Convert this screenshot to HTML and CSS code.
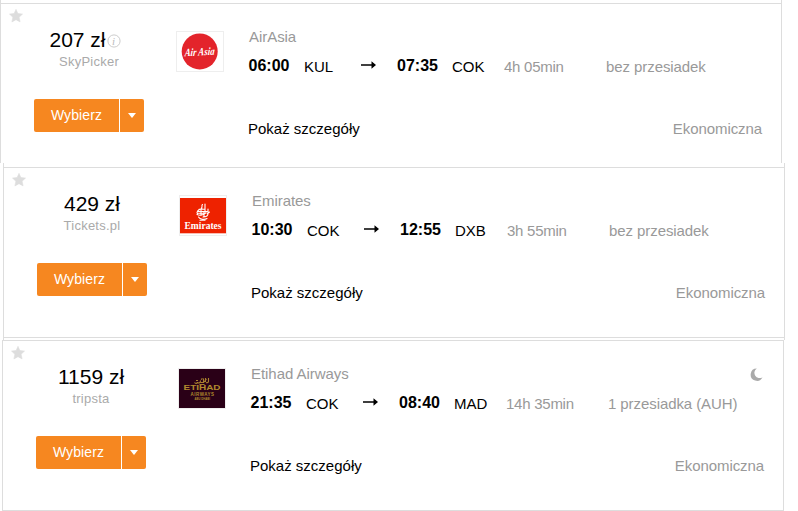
FILE: index.html
```
<!DOCTYPE html>
<html lang="pl">
<head>
  <meta charset="utf-8">
  <title>Loty</title>
  <link rel="stylesheet" href="styles.css">
</head>
<body>
  <div class="results">
    <div class="frame frame-first">
      <div class="card">
        <svg class="star" viewBox="0 0 14 14"><path d="M7 0.4 L8.9 4.6 L13.5 5.1 L10.1 8.2 L11.1 12.9 L7 10.7 L2.9 12.9 L3.9 8.2 L0.5 5.1 L5.1 4.6 Z"/></svg>
        <div class="offer">
          <div class="price">207 zł<svg class="info" viewBox="0 0 14 14"><circle cx="7" cy="7" r="6.1"/><text x="5" y="10.8">i</text></svg></div>
          <div class="agent">SkyPicker</div>
          <div class="buttons">
            <button class="select">Wybierz</button>
            <button class="more"><span class="caret"></span></button>
          </div>
        </div>
        <div class="logo">
          <svg viewBox="0 0 46 39">
            <circle cx="22.7" cy="19.4" r="18" fill="#e3242b"/>
            <text class="logo-airasia" x="7.5" y="23.5" textLength="30" lengthAdjust="spacingAndGlyphs" transform="rotate(-3 23 20) skewX(-8) translate(3 0)">Air Asia</text>
          </svg>
        </div>
        <div class="flight">
          <div class="airline">AirAsia</div>
          <div class="route">
            <span class="time">06:00</span>
            <span class="code">KUL</span>
            <svg class="arrow" viewBox="0 0 15 8"><path d="M0 3.2h10.5V0.3L15 4l-4.5 3.7V4.8H0z"/></svg>
            <span class="time arrive">07:35</span>
            <span class="code to">COK</span>
            <span class="duration">4h 05min</span>
            <span class="stops">bez przesiadek</span>
          </div>
          <div class="bottom">
            <a class="details">Pokaż szczegóły</a>
            <span class="cabin">Ekonomiczna</span>
          </div>
        </div>
      </div>
    </div>

    <div class="frame frame-second">
      <div class="card">
        <svg class="star" viewBox="0 0 14 14"><path d="M7 0.4 L8.9 4.6 L13.5 5.1 L10.1 8.2 L11.1 12.9 L7 10.7 L2.9 12.9 L3.9 8.2 L0.5 5.1 L5.1 4.6 Z"/></svg>
        <div class="offer">
          <div class="price">429 zł</div>
          <div class="agent">Tickets.pl</div>
          <div class="buttons">
            <button class="select">Wybierz</button>
            <button class="more"><span class="caret"></span></button>
          </div>
        </div>
        <div class="logo">
          <svg viewBox="0 0 46 39">
            <rect y="2" width="46" height="35.3" fill="#ee2200"/>
            <g fill="none" stroke="#fff" stroke-width="1.1" stroke-linecap="round">
              <path d="M22.5 8.5c-1.5 1 .5 2-1 3.5M25 8v7M22 12.5c-4 1-6 3.500-4.500 5.500M18 15.500h9M17 18.500c3 1.500 7 .5 9-2M28 13v4.500c0 3-3 3.500-5 3.500M18.500 21c1.500 2.500 6 3 8.500 1.500M20 24.300h5M21 14v5M24 16v4.500M27.500 17.500l2-1.500M19 13.200h6M18 17.300h8"/>
            </g>
            <text class="logo-emirates" x="4.5" y="32.5" textLength="37" lengthAdjust="spacingAndGlyphs">Emirates</text>
          </svg>
        </div>
        <div class="flight">
          <div class="airline">Emirates</div>
          <div class="route">
            <span class="time">10:30</span>
            <span class="code">COK</span>
            <svg class="arrow" viewBox="0 0 15 8"><path d="M0 3.2h10.5V0.3L15 4l-4.5 3.7V4.8H0z"/></svg>
            <span class="time arrive">12:55</span>
            <span class="code to">DXB</span>
            <span class="duration">3h 55min</span>
            <span class="stops">bez przesiadek</span>
          </div>
          <div class="bottom">
            <a class="details">Pokaż szczegóły</a>
            <span class="cabin">Ekonomiczna</span>
          </div>
        </div>
      </div>
    </div>

    <div class="frame frame-third">
      <div class="card">
        <svg class="star" viewBox="0 0 14 14"><path d="M7 0.4 L8.9 4.6 L13.5 5.1 L10.1 8.2 L11.1 12.9 L7 10.7 L2.9 12.9 L3.9 8.2 L0.5 5.1 L5.1 4.6 Z"/></svg>
        <div class="offer">
          <div class="price">1159 zł</div>
          <div class="agent">tripsta</div>
          <div class="buttons">
            <button class="select">Wybierz</button>
            <button class="more"><span class="caret"></span></button>
          </div>
        </div>
        <div class="logo">
          <svg viewBox="0 0 46 39">
            <rect width="46" height="39" fill="#2a0017"/>
            <path d="M15.5 13.5c1 1.5 3 1 3-.5M18.5 13.5c1.5 1 3 .5 3-2M21.5 13.5h3V9.5M24.5 13.5l3-3.5M27 13.5c1 .5 2.5 0 2.5-1V9M17 11.5h2M20.5 15.5h5M22 10.5l1.5-1M26.500 9v4" fill="none" stroke="#a8802f" stroke-width="1.1"/>
            <text class="logo-etihad" x="4.5" y="21.3" font-size="7" textLength="37" lengthAdjust="spacingAndGlyphs">ETIHAD</text>
            <text class="logo-etihad" x="11.5" y="27" font-size="4.5" textLength="23.5" lengthAdjust="spacing">AIRWAYS</text>
            <text class="logo-etihad" x="15.5" y="31" font-size="2.8" textLength="15.5" lengthAdjust="spacingAndGlyphs">ABU DHABI</text>
          </svg>
        </div>
        <div class="flight">
          <svg class="night" viewBox="0 0 13 13"><path d="M6.8 0.4A6.2 6.2 0 1 0 12.5 9.2A4.8 4.8 0 1 1 6.8 0.4z"/></svg>
          <div class="airline">Etihad Airways</div>
          <div class="route">
            <span class="time">21:35</span>
            <span class="code">COK</span>
            <svg class="arrow" viewBox="0 0 15 8"><path d="M0 3.2h10.5V0.3L15 4l-4.5 3.7V4.8H0z"/></svg>
            <span class="time arrive">08:40</span>
            <span class="code to">MAD</span>
            <span class="duration">14h 35min</span>
            <span class="stops">1 przesiadka (AUH)</span>
          </div>
          <div class="bottom">
            <a class="details">Pokaż szczegóły</a>
            <span class="cabin">Ekonomiczna</span>
          </div>
        </div>
      </div>
    </div>
  </div>
</body>
</html>
```
FILE: styles.css
```
* {
  box-sizing: border-box;
}

body {
  margin: 0;
  background-color: #fff;
  font-family: "Liberation Sans", Arial, sans-serif;
  font-size: 15px;
  color: #000;
}

.results {
  height: 511px;
  overflow: hidden;
}

.frame {
  width: 782px;
  border-left: 1px solid #ddd;
  border-right: 1px solid #ddd;
}

.frame-first {
  height: 163px;
  padding-top: 3px;
}

.frame-second {
  height: 177px;
  margin-left: 3px;
  padding-top: 4px;
}

.frame-second .card {
  height: 171px;
  border-bottom: 1px solid #ddd;
}

.frame-third {
  height: 171px;
  margin-left: 2px;
  border-bottom: 1px solid #ddd;
}

.card {
  position: relative;
  display: flex;
  border-top: 1px solid #ddd;
}

.star {
  position: absolute;
  left: 8px;
  top: 5px;
  width: 14px;
  height: 14px;
  fill: #ddd;
  stroke: #ddd;
  stroke-width: 0.6;
  stroke-linejoin: round;
}

.offer {
  width: 110px;
  margin-left: 33px;
  padding-top: 24px;
  text-align: center;
}

.price {
  display: flex;
  justify-content: center;
  align-items: center;
  height: 24px;
  font-size: 21px;
  line-height: 24px;
}

.info {
  width: 14px;
  height: 14px;
  margin: 2px 8px 0 1px;
}

.info circle {
  fill: none;
  stroke: #ccc;
}

.info text {
  fill: #bbb;
  font: italic 11px "Liberation Serif", serif;
}

.agent {
  height: 19px;
  font-size: 13px;
  line-height: 20px;
  letter-spacing: 0.25px;
  color: #aaa;
}

.buttons {
  display: flex;
  gap: 1px;
  margin-top: 28px;
}

button {
  height: 33px;
  padding: 0 0 1px;
  border: 0;
  background-color: #f68720;
  color: #fff;
  font-family: inherit;
  font-size: 14px;
  letter-spacing: 0.1px;
}

.select {
  width: 85px;
  border-radius: 2px 0 0 2px;
}

.more {
  display: flex;
  justify-content: center;
  align-items: center;
  width: 24px;
  border-radius: 0 2px 2px 0;
}

.caret {
  border: 4px solid transparent;
  border-top: 5px solid #fff;
  border-bottom: 0;
}

.logo {
  width: 48px;
  height: 41px;
  margin: 27px 24px 0 32px;
  border: 1px solid #eee;
}

.logo svg {
  display: block;
  width: 46px;
  height: 39px;
}

.logo-airasia {
  fill: #fff;
  font: italic bold 11px "Liberation Serif", serif;
}

.logo-emirates {
  fill: #fff;
  font: bold 9.5px "Liberation Serif", serif;
}

.logo-etihad {
  fill: #b08a2e;
  font-family: "Liberation Sans", sans-serif;
  font-weight: bold;
}

.flight {
  flex: 1;
  padding: 23px 19px 0 0;
}

.airline {
  padding-left: 1px;
  letter-spacing: -0.05px;
  line-height: 20px;
  color: #999;
}

.route {
  display: flex;
  align-items: baseline;
  height: 20px;
  margin-top: 10px;
  line-height: 20px;
}

.time {
  position: relative;
  top: -1px;
  width: 56px;
  padding-left: 0.5px;
  font-size: 16px;
  font-weight: bold;
}

.code {
  width: 57px;
}

.arrow {
  width: 15px;
  height: 8px;
  margin: 0 21px 4px 0;
  align-self: center;
}

.arrive {
  width: 55px;
  padding-left: 0;
}

.to {
  width: 52px;
}

.duration {
  width: 102px;
  letter-spacing: -0.25px;
  color: #999;
}

.stops {
  letter-spacing: -0.08px;
  color: #999;
}

.bottom {
  display: flex;
  justify-content: space-between;
  margin-top: 42px;
  line-height: 20px;
}

.cabin {
  letter-spacing: -0.08px;
  color: #999;
}

.night {
  position: absolute;
  right: 20px;
  top: 27px;
  width: 13px;
  height: 13px;
  fill: #aaa;
}
```
